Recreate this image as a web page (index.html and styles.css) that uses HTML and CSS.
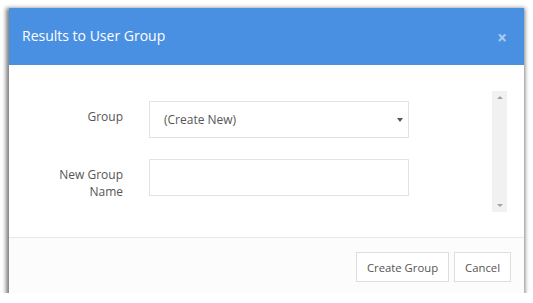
FILE: index.html
```html
<!DOCTYPE html>
<html lang="en">

<head>
  <meta charset="UTF-8" />
  <meta name="viewport" content="width=device-width, initial-scale=1.0" />
  <title>Results to User Group</title>
  <link rel="stylesheet" href="styles.css">
</head>

<body>

  <div class="dialog">
    <div class="dialog-header">
      <span class="dialog-title">Results to User Group</span>
      <span class="close">&times;</span>
    </div>
    <div class="dialog-body">
      <form class="group-form" action="">
        <label for="group" class="lbl">Group</label>
        <div class="select-box" id="group">
          <span>(Create New)</span>
          <span class="caret"></span>
        </div>
        <label for="gname" class="lbl">New Group<br>Name</label>
        <input type="text" id="gname" class="txt" />
      </form>
      <div class="scrollbar">
        <span class="arrow up"></span>
        <span class="arrow down"></span>
      </div>
    </div>
    <div class="dialog-footer">
      <button type="button" class="btn">Create Group</button>
      <button type="button" class="btn">Cancel</button>
    </div>
  </div>

</body>

</html>
```

FILE: styles.css
```css
body {
  margin: 0;
  background-color: white;
  font-family: "Open Sans", "Liberation Sans", sans-serif;
}

.dialog {
  display: flex;
  flex-direction: column;
  width: 515px;
  height: 285px;
  margin: 8px 0 0 9px;
  background-color: white;
  box-shadow: -1px 2px 4px 2px rgba(0, 0, 0, 0.5);
}

.dialog-header {
  display: flex;
  align-items: center;
  justify-content: space-between;
  height: 57px;
  padding: 0 17px 0 13px;
  background-color: rgb(74, 144, 226);
  color: white;
}

.dialog-title {
  font-size: 14px;
  padding-bottom: 3px;
}

.close {
  font-size: 17px;
  font-weight: bold;
  color: rgba(255, 255, 255, 0.55);
  padding-top: 2px;
}

.dialog-body {
  display: flex;
  justify-content: space-between;
  height: 172px;
  padding: 26px 17px 0 0;
  box-sizing: border-box;
}

.group-form {
  display: grid;
  grid-template-columns: 114px 260px;
  grid-auto-rows: 37px;
  column-gap: 26px;
  row-gap: 21px;
  padding-top: 10px;
  margin: 0;
}

.lbl {
  text-align: right;
  font-size: 12px;
  line-height: 17px;
  padding-top: 7px;
  color: #555;
}

.select-box {
  display: flex;
  align-items: center;
  justify-content: space-between;
  padding: 0 5px 0 14px;
  border: 1px solid #e3e3e3;
  font-size: 12px;
  color: #555;
}

.caret {
  width: 0;
  height: 0;
  border-left: 3px solid transparent;
  border-right: 3px solid transparent;
  border-top: 4px solid #555;
}

.txt {
  border: 1px solid #e3e3e3;
  margin: 0;
  padding: 0 10px;
  outline: none;
}

.scrollbar {
  display: flex;
  flex-direction: column;
  justify-content: space-between;
  align-items: center;
  width: 15px;
  height: 121px;
  padding: 5px 0;
  box-sizing: border-box;
  background-color: #f1f1f1;
}

.arrow {
  width: 0;
  height: 0;
  border-left: 3px solid transparent;
  border-right: 3px solid transparent;
}

.up {
  border-bottom: 3px solid #a3a3a3;
}

.down {
  border-top: 3px solid #a3a3a3;
}

.dialog-footer {
  display: flex;
  justify-content: flex-end;
  gap: 5px;
  flex: 1;
  padding: 14px 13px 0 0;
  border-top: 1px solid #e8e8e8;
  background-color: #fcfcfc;
}

.btn {
  height: 30px;
  padding: 0 10px;
  font-family: inherit;
  font-size: 11.3px;
  color: #555;
  background-color: white;
  border: 1px solid #dedede;
}
```
